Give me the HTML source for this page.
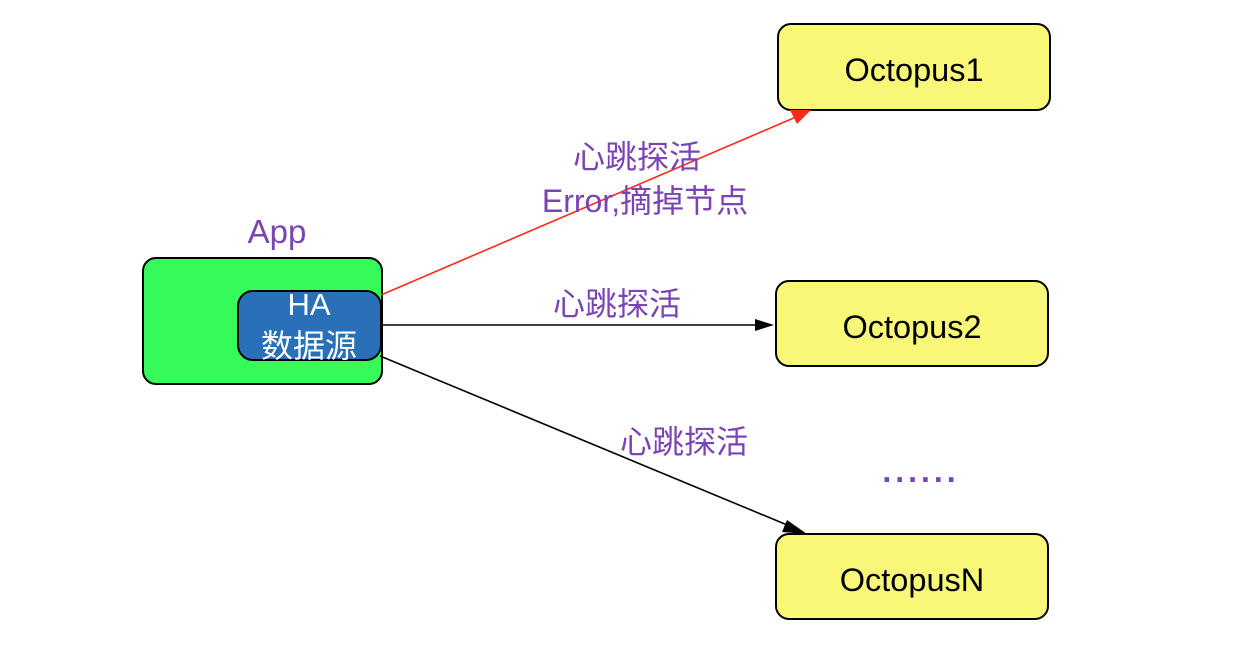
<!DOCTYPE html>
<html><head><style>html,body{margin:0;padding:0;background:#fff}</style></head><body>
<svg width="1246" height="660" xmlns="http://www.w3.org/2000/svg" style="display:block;font-family:'Liberation Sans','Noto Sans CJK SC',sans-serif">
<rect x="143" y="258" width="239" height="126" rx="13" fill="#36f95a" stroke="#000" stroke-width="2"/>
<rect x="238" y="291" width="143" height="69" rx="15" fill="#2a70b8" stroke="#000" stroke-width="2"/>
<text x="309" y="315" font-size="31" fill="#fff" text-anchor="middle">HA</text>
<text x="309" y="357" font-size="32" fill="#fff" text-anchor="middle">数据源</text>
<text x="277" y="243" font-size="33" fill="#7a44b4" text-anchor="middle">App</text>
<rect x="778" y="24" width="272" height="86" rx="13" fill="#f9f777" stroke="#000" stroke-width="2"/>
<rect x="776" y="281" width="272" height="85" rx="13" fill="#f9f777" stroke="#000" stroke-width="2"/>
<rect x="776" y="534" width="272" height="85" rx="13" fill="#f9f777" stroke="#000" stroke-width="2"/>
<text x="914" y="81" font-size="32.5" fill="#000" text-anchor="middle">Octopus1</text>
<text x="912" y="338" font-size="32.5" fill="#000" text-anchor="middle">Octopus2</text>
<text x="912" y="591" font-size="32.5" fill="#000" text-anchor="middle">OctopusN</text>
<line x1="381" y1="295" x2="796" y2="117" stroke="#ff2a1a" stroke-width="1.6"/>
<polygon points="811,110 790,110 797,124" fill="#ff2a1a"/>
<line x1="382" y1="325" x2="758" y2="325" stroke="#000" stroke-width="1.6"/>
<polygon points="774,325 755,319 755,331" fill="#000"/>
<line x1="380" y1="356" x2="792" y2="527" stroke="#000" stroke-width="1.6"/>
<polygon points="807,534 787,520 782,532" fill="#000"/>
<text x="637" y="168" font-size="32" fill="#7a44b4" text-anchor="middle">心跳探活</text>
<text x="645" y="212" font-size="32" fill="#7a44b4" text-anchor="middle">Error,摘掉节点</text>
<text x="617" y="315" font-size="32" fill="#7a44b4" text-anchor="middle">心跳探活</text>
<text x="684" y="453" font-size="32" fill="#7a44b4" text-anchor="middle">心跳探活</text>
<text x="921" y="482" font-size="32" font-weight="bold" fill="#7a44b4" text-anchor="middle" letter-spacing="4">......</text>
</svg>
</body></html>
